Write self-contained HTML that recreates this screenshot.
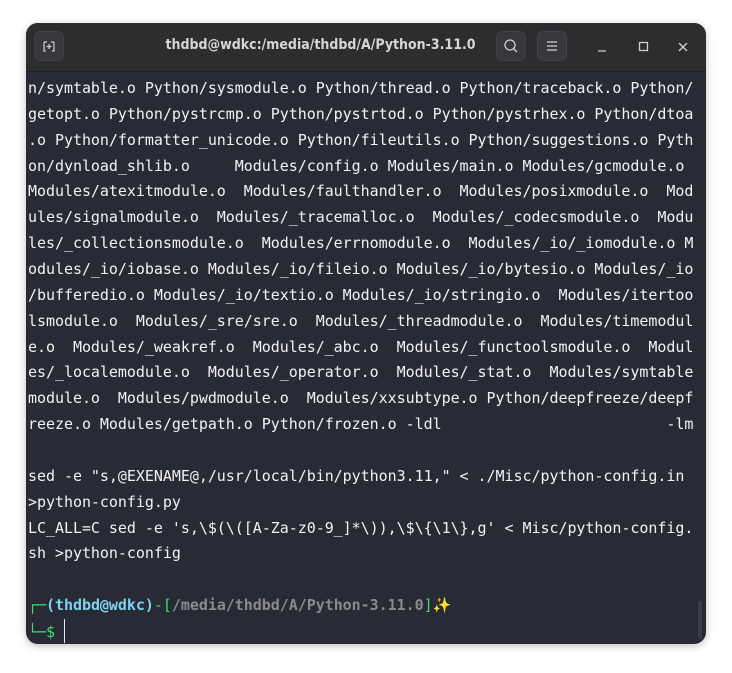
<!DOCTYPE html>
<html><head><meta charset="utf-8"><style>
html,body{margin:0;padding:0;background:#ffffff;width:732px;height:673px;overflow:hidden}
.win{position:absolute;left:26px;top:23px;width:680px;height:621px;background:#282a36;border-radius:12px;overflow:hidden;box-shadow:0 2px 8px rgba(0,0,0,.25)}
.tb{position:absolute;left:0;top:0;width:680px;height:48px;background:#2d2d30;border-bottom:1px solid #1e1e20}
.title{position:absolute;left:128px;width:333px;top:14px;text-align:center;font:bold 14px "DejaVu Sans Condensed","Liberation Sans Narrow","Liberation Sans",sans-serif;font-stretch:condensed;color:#d6d6d6;white-space:nowrap}
.btn{position:absolute;top:8px;width:30px;height:30px;border-radius:7px;background:#38383c;border:1px solid #434347;box-sizing:border-box}
.term{position:absolute;left:2px;top:53px;font:15px "DejaVu Sans Mono","Liberation Mono",monospace;line-height:25.86px;color:#f2f2f2;white-space:pre;letter-spacing:-0.04px}
.g{color:#3fdc6e}.c{color:#7dd3f0;font-weight:bold}.p{color:#8a8a8f;font-weight:bold}
</style></head><body>
<div class="win">
<div class="tb">
<div class="btn" style="left:8px"><svg width="28" height="28" viewBox="0 0 28 28"><path d="M9 10v9h2M19 10v9h-2M9 10h3M19 10h-3M14 12v5M11.5 14.5h5" stroke="#cfcfcf" stroke-width="1.2" fill="none"/></svg></div>
<div class="title">thdbd@wdkc:/media/thdbd/A/Python-3.11.0</div>
<div class="btn" style="left:470px"><svg width="28" height="28" viewBox="0 0 28 28"><circle cx="13" cy="13" r="5" stroke="#d0d0d0" stroke-width="1.3" fill="none"/><path d="M16.5 16.5l3.5 3.5" stroke="#d0d0d0" stroke-width="1.3"/></svg></div>
<div class="btn" style="left:511px"><svg width="28" height="28" viewBox="0 0 28 28"><path d="M9 10h10M9 14h10M9 18h10" stroke="#d0d0d0" stroke-width="1.2"/></svg></div>
<svg style="position:absolute;left:560px;top:12px" width="110" height="24"><path d="M12 16h8" stroke="#d0d0d0" stroke-width="1.3"/><rect x="53.5" y="7.5" width="8" height="8" stroke="#d0d0d0" stroke-width="1.3" fill="none"/><path d="M93 8l8 8M101 8l-8 8" stroke="#d0d0d0" stroke-width="1.3"/></svg>
</div>
<div class="term">n/symtable.o Python/sysmodule.o Python/thread.o Python/traceback.o Python/
getopt.o Python/pystrcmp.o Python/pystrtod.o Python/pystrhex.o Python/dtoa
.o Python/formatter_unicode.o Python/fileutils.o Python/suggestions.o Pyth
on/dynload_shlib.o     Modules/config.o Modules/main.o Modules/gcmodule.o 
Modules/atexitmodule.o  Modules/faulthandler.o  Modules/posixmodule.o  Mod
ules/signalmodule.o  Modules/_tracemalloc.o  Modules/_codecsmodule.o  Modu
les/_collectionsmodule.o  Modules/errnomodule.o  Modules/_io/_iomodule.o M
odules/_io/iobase.o Modules/_io/fileio.o Modules/_io/bytesio.o Modules/_io
/bufferedio.o Modules/_io/textio.o Modules/_io/stringio.o  Modules/itertoo
lsmodule.o  Modules/_sre/sre.o  Modules/_threadmodule.o  Modules/timemodul
e.o  Modules/_weakref.o  Modules/_abc.o  Modules/_functoolsmodule.o  Modul
es/_localemodule.o  Modules/_operator.o  Modules/_stat.o  Modules/symtable
module.o  Modules/pwdmodule.o  Modules/xxsubtype.o Python/deepfreeze/deepf
reeze.o Modules/getpath.o Python/frozen.o -ldl                         -lm

sed -e "s,@EXENAME@,/usr/local/bin/python3.11," &lt; ./Misc/python-config.in
&gt;python-config.py
LC_ALL=C sed -e 's,\$(\([A-Za-z0-9_]*\)),\$\{\1\},g' &lt; Misc/python-config.
sh &gt;python-config

<span class="g">┌─</span><span class="c">(thdbd@wdkc)</span><span class="g">-[</span><span class="p">/media/thdbd/A/Python-3.11.0</span><span class="g">]</span><span style="color:#f5c542">✨</span>
<span class="g">└─$</span> <span style="display:inline-block;width:1.5px;height:24px;background:#e8e8e8;vertical-align:-6px"></span></div>
<div style="position:absolute;right:4px;top:578px;width:4px;height:38px;background:#3a3c48;border-radius:2px"></div>
</div>
</body></html>
